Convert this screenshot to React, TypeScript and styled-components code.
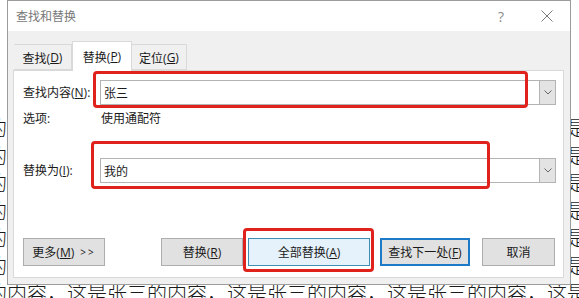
import React from "react";
import styled, { createGlobalStyle } from "styled-components";

const GlobalStyle = createGlobalStyle`
  html, body {
    margin: 0;
    padding: 0;
    background: #ffffff;
    overflow: hidden;
  }
`;

const Page = styled.div`
  position: relative;
  width: 579px;
  height: 298px;
  overflow: hidden;
  background: #ffffff;
`;

const Doc = styled.div`
  display: flex;
  flex-direction: column;
  padding-top: 114px;
  margin-left: -13px;
  font-family: "Noto Sans CJK SC", sans-serif;
  font-size: 20px;
  font-weight: 300;
  line-height: 27.5px;
  color: #1a1a1a;
  white-space: nowrap;
`;

const Dialog = styled.div`
  position: absolute;
  left: 7px;
  top: 0;
  width: 564px;
  height: 285px;
  box-sizing: border-box;
  border: 1px solid #9c9c9c;
  background: #f0f0f0;
  display: flex;
  flex-direction: column;
  font-family: "Open Sans", "Noto Sans CJK SC", sans-serif;
  font-size: 12px;
  color: #1a1a1a;
`;

const TitleBar = styled.div`
  height: 30px;
  background: #ffffff;
  display: flex;
  align-items: center;
  padding-left: 8px;
`;

const Title = styled.span`
  flex: 1;
  color: #777;
  font-size: 12px;
`;

const CaptionButton = styled.div`
  width: 46px;
  height: 30px;
  display: flex;
  align-items: center;
  justify-content: center;
  color: #8a8a8a;
  font-size: 14px;
`;

const Body = styled.div`
  flex: 1;
  padding: 10px 6px 6px 5px;
  display: flex;
  flex-direction: column;
`;

const TabRow = styled.div`
  display: flex;
  align-items: flex-end;
  height: 29px;
  padding-left: 1px;
`;

const Tab = styled.div<{ $active?: boolean; $w: number }>`
  width: ${(p) => p.$w}px;
  height: ${(p) => (p.$active ? 30 : 26)}px;
  box-sizing: border-box;
  display: flex;
  align-items: center;
  justify-content: center;
  padding-top: ${(p) => (p.$active ? 0 : 1)}px;
  background: ${(p) => (p.$active ? "#ffffff" : "#f0f0f0")};
  border: 1px solid #d9d9d9;
  border-bottom: ${(p) => (p.$active ? "none" : "1px solid #d9d9d9")};
  border-left: ${(p) => (p.$active ? "1px solid #d9d9d9" : "none")};
  margin-bottom: ${(p) => (p.$active ? -1 : 0)}px;
  position: relative;
  z-index: ${(p) => (p.$active ? 1 : 0)};
`;

const Panel = styled.div`
  height: 208px;
  box-sizing: border-box;
  background: #ffffff;
  border: 1px solid #d9d9d9;
  padding: 9px 7px 0 9px;
  display: flex;
  flex-direction: column;
`;

const FieldRow = styled.div<{ $mt: number }>`
  display: grid;
  grid-template-columns: 77px 1fr;
  align-items: center;
  margin-top: ${(p) => p.$mt}px;
`;

const Label = styled.span<{ $indent?: number }>`
  line-height: 16px;
  padding-left: ${(p) => p.$indent ?? 0}px;
`;

const Combo = styled.div`
  display: flex;
  height: 25px;
`;

const ComboInput = styled.div`
  flex: 1;
  box-sizing: border-box;
  border: 1px solid #b4b4b4;
  border-right: none;
  background: #ffffff;
  display: flex;
  align-items: center;
  padding-left: 3px;
`;

const ComboArrow = styled.div`
  width: 17px;
  box-sizing: border-box;
  border: 1px solid #b4b4b4;
  background: #e3e3e3;
  display: flex;
  align-items: center;
  justify-content: center;
`;

const ButtonRow = styled.div`
  display: flex;
  margin-top: 55px;
  height: 28px;
`;

const Button = styled.div<{ $w: number; $ml: number; $variant?: "default" | "hover" | "focus" }>`
  width: ${(p) => p.$w}px;
  margin-left: ${(p) => p.$ml}px;
  box-sizing: border-box;
  display: flex;
  align-items: center;
  justify-content: center;
  background: ${(p) => (p.$variant === "hover" ? "#e5f1fb" : "#e1e1e1")};
  border: ${(p) =>
    p.$variant === "hover"
      ? "1px solid #3f8fb4"
      : p.$variant === "focus"
      ? "2px solid #1c7ac6"
      : "1px solid #adadad"};
`;

const Arrows = styled.span`
  margin-left: 6px;
  letter-spacing: 2px;
  font-size: 10px;
`;

const Annot = styled.div`
  position: absolute;
  box-sizing: border-box;
  border: 3px solid #e0221c;
  border-radius: 4px;
  pointer-events: none;
`;

const Chevron = () => (
  <svg width="8" height="5" viewBox="0 0 8 5">
    <path d="M0.5 0.5 L4 4 L7.5 0.5" fill="none" stroke="#666" strokeWidth="1" />
  </svg>
);

const CloseIcon = () => (
  <svg width="12" height="12" viewBox="0 0 12 12">
    <path d="M0.5 0.5 L11.5 11.5 M11.5 0.5 L0.5 11.5" stroke="#7a7a7a" strokeWidth="1" />
  </svg>
);

const lineText = "的内容，这是张三".repeat(4);
const lines = Array.from({ length: 7 }, (_, i) => i);

export default function App() {
  return (
    <>
      <GlobalStyle />
      <Page>
        <Doc>
          {lines.map((i) => (
            <div key={i}>{lineText}</div>
          ))}
        </Doc>

        <Dialog>
          <TitleBar>
            <Title>查找和替换</Title>
            <CaptionButton>?</CaptionButton>
            <CaptionButton>
              <CloseIcon />
            </CaptionButton>
          </TitleBar>
          <Body>
            <TabRow>
              <Tab $w={58}>
                查找(<u>D</u>)
              </Tab>
              <Tab $w={60} $active>
                替换(<u>P</u>)
              </Tab>
              <Tab $w={55}>
                定位(<u>G</u>)
              </Tab>
            </TabRow>
            <Panel>
              <FieldRow $mt={0}>
                <Label>
                  查找内容(<u>N</u>):
                </Label>
                <Combo>
                  <ComboInput>张三</ComboInput>
                  <ComboArrow>
                    <Chevron />
                  </ComboArrow>
                </Combo>
              </FieldRow>
              <FieldRow $mt={6}>
                <Label>选项:</Label>
                <Label $indent={1}>使用通配符</Label>
              </FieldRow>
              <FieldRow $mt={31}>
                <Label>
                  替换为(<u>I</u>):
                </Label>
                <Combo>
                  <ComboInput>我的</ComboInput>
                  <ComboArrow>
                    <Chevron />
                  </ComboArrow>
                </Combo>
              </FieldRow>
              <ButtonRow>
                <Button $w={82} $ml={0}>
                  更多(<u>M</u>)<Arrows>&gt;&gt;</Arrows>
                </Button>
                <Button $w={82} $ml={56}>
                  替换(<u>R</u>)
                </Button>
                <Button $w={122} $ml={5} $variant="hover">
                  全部替换(<u>A</u>)
                </Button>
                <Button $w={90} $ml={10} $variant="focus">
                  查找下一处(<u>F</u>)
                </Button>
                <Button $w={73} $ml={12}>
                  取消
                </Button>
              </ButtonRow>
            </Panel>
          </Body>
        </Dialog>

        <Annot style={{ left: 93, top: 71, width: 435, height: 37 }} />
        <Annot style={{ left: 91, top: 141, width: 399, height: 48 }} />
        <Annot style={{ left: 243, top: 228, width: 131, height: 44 }} />
      </Page>
    </>
  );
}
